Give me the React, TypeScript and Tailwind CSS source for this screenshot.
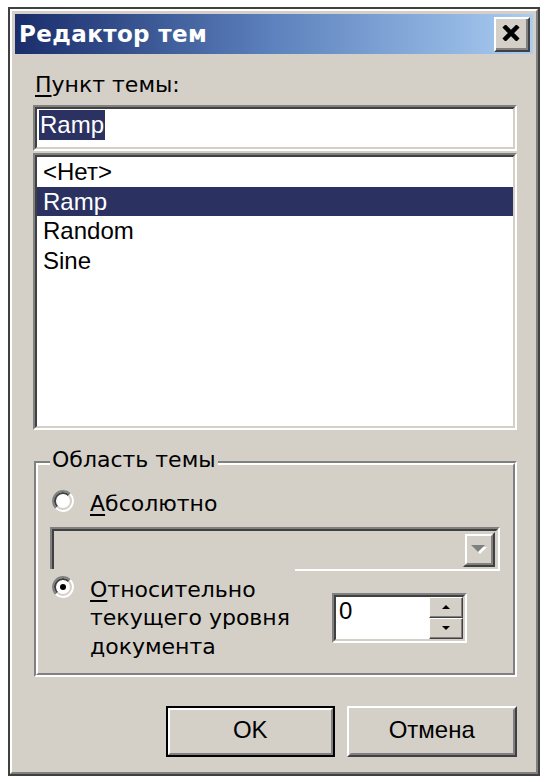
import React from 'react';

const items = ['<Нет>', 'Ramp', 'Random', 'Sine'];

function Radio({ checked }: { checked?: boolean }) {
  return (
    <svg width="22" height="22" viewBox="0 0 22 22" className="shrink-0">
      <circle cx="11" cy="11" r="10" fill="#ffffff" />
      <path d="M 3.93 18.07 A 10 10 0 0 1 18.07 3.93" stroke="#808080" strokeWidth="2" fill="none" />
      <path d="M 18.07 3.93 A 10 10 0 0 1 3.93 18.07" stroke="#ffffff" strokeWidth="2" fill="none" />
      <path d="M 5.34 16.66 A 8 8 0 0 1 16.66 5.34" stroke="#404040" strokeWidth="2" fill="none" />
      <path d="M 16.66 5.34 A 8 8 0 0 1 5.34 16.66" stroke="#d4d0c8" strokeWidth="2" fill="none" />
      {checked && <circle cx="11" cy="11" r="3" fill="#000000" />}
    </svg>
  );
}

function SpinButton({ up }: { up?: boolean }) {
  return (
    <div className="h-[21px] w-[34px] border-t border-l border-white border-r border-b border-r-[#404040] border-b-[#404040] bg-[#d4d0c8]">
      <div className="flex h-full items-center justify-center border-r border-b border-[#808080]">
        <svg width="8" height="4" viewBox="0 0 8 4">
          {up ? <polygon points="4,0 8,4 0,4" fill="#000" /> : <polygon points="0,0 8,0 4,4" fill="#000" />}
        </svg>
      </div>
    </div>
  );
}

export default function App() {
  return (
    <div className="min-h-screen bg-white pl-2 pt-[7px]">
      <div className="h-[769px] w-[532px] border-2 border-[#404040] bg-[#d4d0c8]">
        <div className="h-full border-2 border-t-white border-l-white border-r-[#808080] border-b-[#808080] p-[3px]">
          {/* title bar */}
          <div className="flex h-[40px] items-center justify-between bg-linear-to-r from-[#1b2d6b] via-[#5d82bd] to-[#aacdf2] pl-[4px] pr-[3px]">
            <span className="font-['DejaVu_Sans',sans-serif] text-[23px] font-bold tracking-[0.4px] text-white">Редактор тем</span>
            <div className="h-[35px] w-[36px] border-2 border-t-white border-l-white border-r-[#404040] border-b-[#404040] bg-[#d4d0c8]">
              <div className="flex h-full items-center justify-center border-r-2 border-b-2 border-[#808080]">
                <svg width="20" height="16" viewBox="0 0 20 16">
                  <path d="M3 1 L17 15 M17 1 L3 15" stroke="#000" strokeWidth="4.5" />
                </svg>
              </div>
            </div>
          </div>

          <div className="pl-[18px] pr-[16px]">
            <div className="mt-[18px] pl-[2px] font-['DejaVu_Sans',sans-serif] text-[22px] leading-[26px] text-black">
              <span className="underline decoration-2 underline-offset-[3px]">П</span>ункт темы:
            </div>

            {/* edit */}
            <div className="mt-[7px] h-[46px] border-2 border-t-[#808080] border-l-[#808080] border-r-white border-b-white">
              <div className="h-full border-2 border-t-[#404040] border-l-[#404040] border-r-[#d4d0c8] border-b-[#d4d0c8] bg-white pl-[2px] pt-[1px]">
                <span className="inline-block h-[30px] bg-[#2b3261] px-[1px] font-['Liberation_Sans',Arial,sans-serif] text-[24px] leading-[30px] text-white">Ramp</span>
              </div>
            </div>

            {/* list */}
            <div className="mt-[2px] h-[277px] border-2 border-t-[#808080] border-l-[#808080] border-r-white border-b-white">
              <div className="h-full border-2 border-t-[#404040] border-l-[#404040] border-r-[#d4d0c8] border-b-[#d4d0c8] bg-white">
                {items.map((it) => (
                  <div
                    key={it}
                    className={
                      it === 'Ramp'
                        ? "h-[29.5px] bg-[#2b3261] pl-[6px] font-['Liberation_Sans',Arial,sans-serif] text-[24px] leading-[29.5px] text-white"
                        : "h-[29.5px] pl-[6px] font-['Liberation_Sans',Arial,sans-serif] text-[24px] leading-[29.5px] text-black"
                    }
                  >
                    {it}
                  </div>
                ))}
              </div>
            </div>

            {/* group */}
            <div className="relative ml-[1px] mt-[31px] h-[216px] border-2 border-t-[#808080] border-l-[#808080] border-r-white border-b-white">
              <span className="absolute left-[14px] top-[-16px] bg-[#d4d0c8] px-[2px] font-['DejaVu_Sans',sans-serif] text-[22px] leading-[26px] text-black">
                Область темы
              </span>
              <div className="h-full border-2 border-t-white border-l-white border-r-[#808080] border-b-[#808080] pl-[12px] pt-[25px] font-['DejaVu_Sans',sans-serif] text-[22px] text-black">
                <div className="flex items-start">
                  <div className="ml-[2px]">
                    <Radio />
                  </div>
                  <span className="ml-[16px] leading-[28.5px]">
                    <span className="underline decoration-2 underline-offset-[3px]">А</span>бсолютно
                  </span>
                </div>

                {/* disabled combo */}
                <div className="mt-[8px] h-[42px] w-[450px] border-t-2 border-l-2 border-r-2 border-t-[#808080] border-l-[#808080] border-r-white">
                  <div className="flex h-full justify-end border-t-2 border-l-2 border-r-2 border-t-[#404040] border-l-[#404040] border-r-[#d4d0c8] pr-[1px] pt-[1px]">
                    <div className="h-[35px] w-[32px] border-2 border-t-[#d4d0c8] border-l-[#d4d0c8] border-r-[#404040] border-b-[#404040]">
                      <div className="flex h-full items-center justify-center border-2 border-t-white border-l-white border-r-[#808080] border-b-[#808080]">
                        <svg width="18" height="11" viewBox="0 0 18 11">
                          <polygon points="3,3 17,3 10,10" fill="#ffffff" />
                          <polygon points="1,1 15,1 8,8" fill="#808080" />
                        </svg>
                      </div>
                    </div>
                  </div>
                </div>
                <div className="ml-[245px] h-[2px] w-[205px] bg-white" />

                <div className="mt-[5px] flex items-center">
                  <div className="ml-[2px] self-start">
                    <Radio checked />
                  </div>
                  <div className="ml-[16px] w-[242px] leading-[28.5px]">
                    <div>
                      <span className="underline decoration-2 underline-offset-[3px]">О</span>тносительно
                    </div>
                    <div>текущего уровня</div>
                    <div>документа</div>
                  </div>
                  {/* spin edit */}
                  <div className="h-[50px] w-[135px] border-2 border-t-[#808080] border-l-[#808080] border-r-white border-b-white">
                    <div className="flex h-full border-2 border-t-[#404040] border-l-[#404040] border-r-[#d4d0c8] border-b-[#d4d0c8]">
                      <div className="flex-1 bg-white pl-[3px] font-['Liberation_Sans',Arial,sans-serif] text-[24px] leading-[28px]">0</div>
                      <div className="flex flex-col">
                        <SpinButton up />
                        <SpinButton />
                      </div>
                    </div>
                  </div>
                </div>
              </div>
            </div>

            {/* buttons */}
            <div className="mt-[29px] flex gap-[12px] pl-[133px] font-['Liberation_Sans',Arial,sans-serif] text-[24px] text-black">
              <div className="h-[51px] w-[170px] border-2 border-black">
                <div className="flex h-full items-center justify-center border-2 border-t-white border-l-white border-r-[#808080] border-b-[#808080] pb-[4px]">
                  OK
                </div>
              </div>
              <div className="h-[51px] w-[172px] border-2 border-t-white border-l-white border-r-[#404040] border-b-[#404040]">
                <div className="flex h-full items-center justify-center border-2 border-t-[#d4d0c8] border-l-[#d4d0c8] border-r-[#808080] border-b-[#808080] pb-[4px]">
                  Отмена
                </div>
              </div>
            </div>
          </div>
        </div>
      </div>
    </div>
  );
}
